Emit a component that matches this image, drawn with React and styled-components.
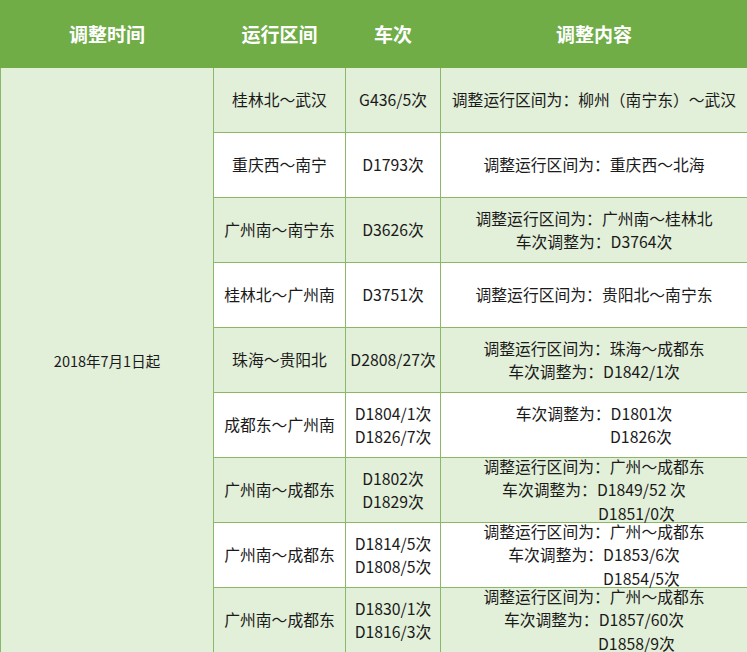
import React from "react";
import styled, { createGlobalStyle } from "styled-components";

const G = createGlobalStyle`
  body { margin: 0; background: #fff; font-family: "Noto Sans CJK SC", "Noto Sans", sans-serif; }
`;
const Table = styled.table`
  width: 747px; border-collapse: collapse; table-layout: fixed;
  font-size: 15.8px; color: #1a1a1a;
`;
const Th = styled.th`
  background: #70ad47; color: #fff; font-size: 19px; font-weight: bold;
  height: 66px; padding: 0; border: 1px solid #70ad47; line-height: 24px;
`;
const Td = styled.td`
  height: 64px; padding: 0; border: 1px solid #8ab866; text-align: center;
  vertical-align: middle; background: ${p => (p.$g ? "#e2efd9" : "#fff")};
  white-space: nowrap; font-size: ${p => (p.$small ? "14.5px" : "inherit")};
`;
const Cell = styled.div`
  height: 64px; display: flex; flex-direction: column; justify-content: center;
  overflow: visible;
`;
const Line = styled.div`
  line-height: 23.5px; flex-shrink: 0;
  text-align: ${p => (p.$x != null ? "left" : "center")};
  padding-left: ${p => (p.$x != null ? p.$x + "px" : "0")};
`;

const rows = [
  ["桂林北～武汉", ["G436/5次"], [["调整运行区间为：柳州（南宁东）～武汉"]]],
  ["重庆西～南宁", ["D1793次"], [["调整运行区间为：重庆西～北海"]]],
  ["广州南～南宁东", ["D3626次"], [["调整运行区间为：广州南～桂林北"], ["车次调整为：D3764次"]]],
  ["桂林北～广州南", ["D3751次"], [["调整运行区间为：贵阳北～南宁东"]]],
  ["珠海～贵阳北", ["D2808/27次"], [["调整运行区间为：珠海～成都东"], ["车次调整为：D1842/1次"]]],
  ["成都东～广州南", ["D1804/1次", "D1826/7次"], [["车次调整为：D1801次"], ["D1826次", 169]]],
  ["广州南～成都东", ["D1802次", "D1829次"], [["调整运行区间为：广州～成都东"], ["车次调整为：D1849/52 次"], ["D1851/0次", 157]]],
  ["广州南～成都东", ["D1814/5次", "D1808/5次"], [["调整运行区间为：广州～成都东"], ["车次调整为：D1853/6次"], ["D1854/5次", 162]]],
  ["广州南～成都东", ["D1830/1次", "D1816/3次"], [["调整运行区间为：广州～成都东"], ["车次调整为：D1857/60次"], ["D1858/9次", 157]]],
];

export default function App() {
  return (
    <>
      <G />
      <Table>
        <colgroup>
          <col style={{ width: 213 }} /><col style={{ width: 132 }} />
          <col style={{ width: 95 }} /><col style={{ width: 307 }} />
        </colgroup>
        <thead>
          <tr><Th>调整时间</Th><Th>运行区间</Th><Th>车次</Th><Th>调整内容</Th></tr>
        </thead>
        <tbody>
          {rows.map((r, i) => (
            <tr key={i}>
              {i === 0 && <Td $g $small rowSpan={9}>2018年7月1日起</Td>}
              <Td $g={i % 2 === 0}><Cell><Line>{r[0]}</Line></Cell></Td>
              <Td $g={i % 2 === 0}><Cell>{r[1].map((t, j) => <Line key={j}>{t}</Line>)}</Cell></Td>
              <Td $g={i % 2 === 0}><Cell>{r[2].map(([t, x], j) => <Line key={j} $x={x}>{t}</Line>)}</Cell></Td>
            </tr>
          ))}
        </tbody>
      </Table>
    </>
  );
}
